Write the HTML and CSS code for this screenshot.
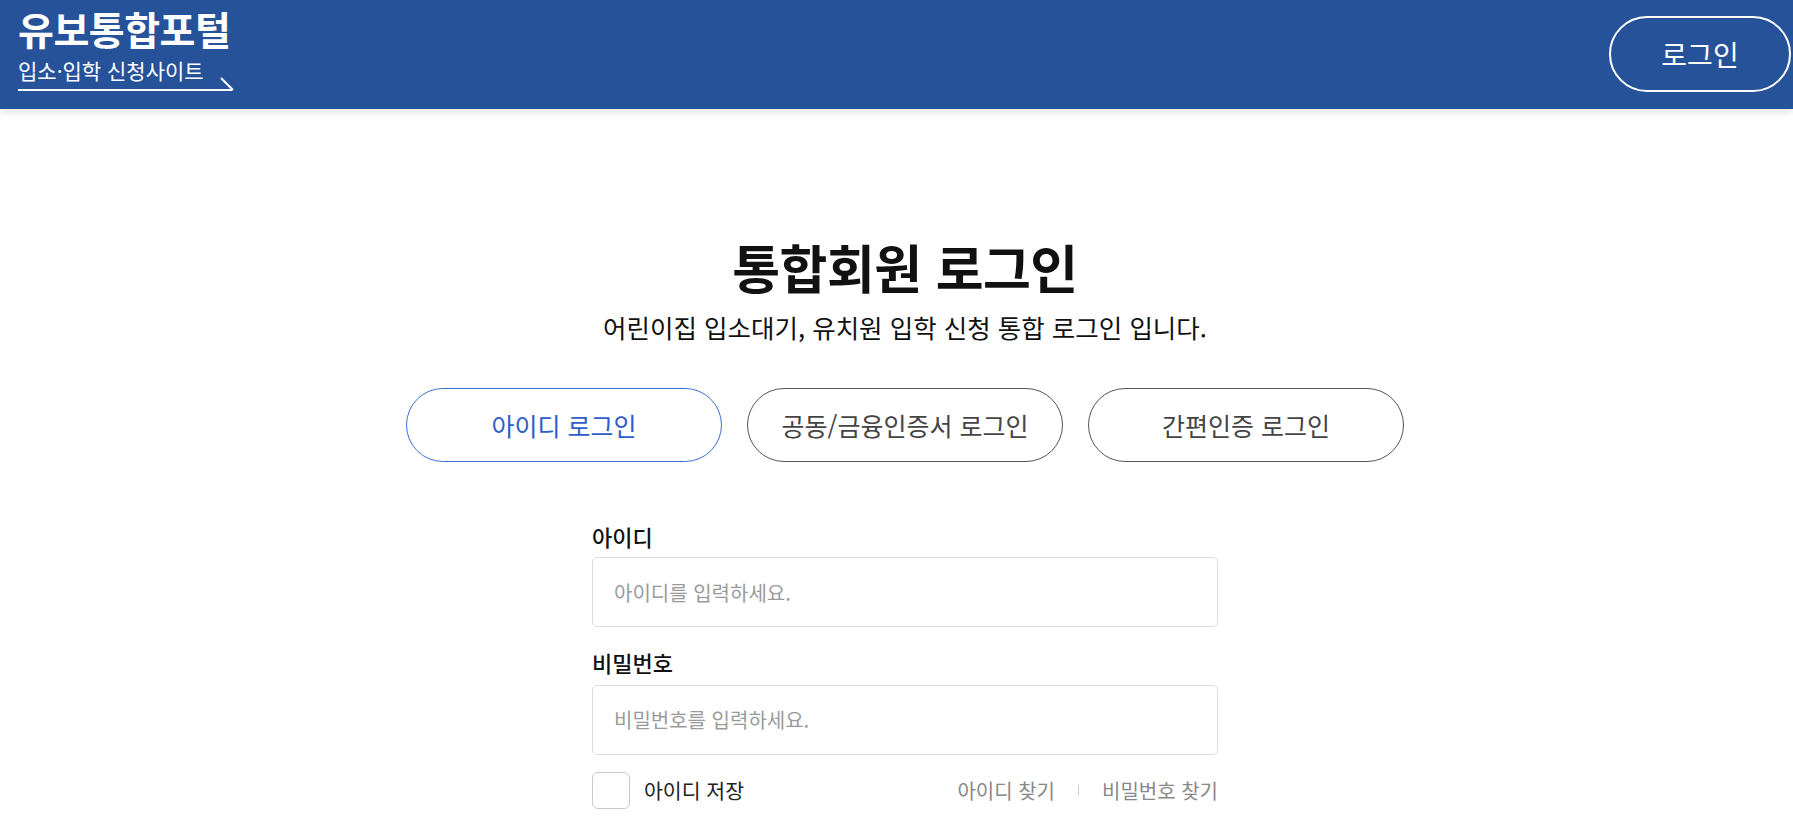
FILE: index.html
```html
<!DOCTYPE html>
<html lang="ko">
<head>
<meta charset="utf-8">
<title>유보통합포털</title>
<link rel="stylesheet" href="styles.css">
</head>
<body>
<header class="top">
  <div class="brand">
    <div class="brand-title">유보통합포털</div>
    <div class="brand-sub">입소·입학 신청사이트</div>
  </div>
  <button class="top-login" type="button">로그인</button>
</header>
<main class="main">
  <h1 class="page-title">통합회원 로그인</h1>
  <p class="page-desc">어린이집 입소대기, 유치원 입학 신청 통합 로그인 입니다.</p>
  <div class="tabs">
    <button class="tab tab-active" type="button">아이디 로그인</button>
    <button class="tab" type="button">공동/금융인증서 로그인</button>
    <button class="tab" type="button">간편인증 로그인</button>
  </div>
  <form class="form">
    <label class="field-label" for="uid">아이디</label>
    <input class="field" id="uid" type="text" placeholder="아이디를 입력하세요.">
    <label class="field-label second" for="upw">비밀번호</label>
    <input class="field second" id="upw" type="password" placeholder="비밀번호를 입력하세요.">
    <div class="options">
      <label class="save">
        <span class="check"></span>
        <span class="save-text">아이디 저장</span>
      </label>
      <div class="finds">
        <a class="find" href="#">아이디 찾기</a>
        <span class="sep"></span>
        <a class="find" href="#">비밀번호 찾기</a>
      </div>
    </div>
  </form>
</main>
</body>
</html>
```
FILE: styles.css
```css
* { box-sizing: border-box; }
html, body { margin: 0; padding: 0; }
body {
  font-family: "Noto Sans CJK KR", "Noto Sans", sans-serif;
  color: #111;
  background: #fff;
  overflow: hidden;
}
.top {
  height: 109px;
  background: #26529a;
  display: flex;
  align-items: center;
  justify-content: space-between;
  padding: 0 2px 0 18px;
  box-shadow: 0 3px 8px rgba(0, 0, 0, 0.12);
  position: relative;
  z-index: 1;
}
.brand { color: #fff; align-self: flex-start; padding-top: 9px; }
.brand-title {
  font-size: 39px;
  font-weight: 700;
  line-height: 1;
  letter-spacing: -0.5px;
}
.brand-sub {
  position: relative;
  margin-top: 12px;
  width: 214px;
  font-size: 21px;
  line-height: 1;
  padding-bottom: 8px;
  border-bottom: 2px solid #fff;
}
.brand-sub::after {
  content: "";
  position: absolute;
  right: -1px;
  bottom: -2px;
  width: 17px;
  height: 2px;
  background: #fff;
  transform-origin: right center;
  transform: rotate(45deg);
}
.top-login {
  width: 182px;
  height: 76px;
  border: 2px solid #fff;
  border-radius: 38px;
  background: transparent;
  color: #fff;
  font-family: inherit;
  font-size: 28px;
  line-height: 1;
  padding: 0;
  margin-top: -1px;
}
.main {
  display: flex;
  flex-direction: column;
  align-items: center;
  padding: 127px 0 0 17px;
}
.page-title {
  margin: 0;
  font-size: 52px;
  font-weight: 700;
  line-height: 1.2;
  letter-spacing: -0.5px;
}
.page-desc {
  margin: 14px 0 0;
  font-size: 25.5px;
  line-height: 1.2;
  color: #111;
}
.tabs {
  display: flex;
  gap: 25px;
  margin-top: 45px;
}
.tab {
  width: 316px;
  height: 74px;
  border: 1px solid #555;
  border-radius: 37px;
  background: #fff;
  color: #444;
  font-family: inherit;
  font-size: 25px;
  padding: 0;
}
.tab-active {
  border-color: #3f6fd2;
  color: #2e5dc9;
}
.form {
  width: 626px;
  display: flex;
  flex-direction: column;
  margin-top: 61px;
}
.field-label {
  font-size: 22px;
  font-weight: 500;
  line-height: 1.2;
  color: #111;
}
.field-label.second { margin-top: 22px; }
.field {
  margin-top: 8px;
  height: 70px;
  border: 1px solid #dcdcdc;
  border-radius: 5px;
  padding: 0 21px;
  font-family: inherit;
  font-size: 20px;
  color: #222;
  outline: none;
}
.field.second { margin-top: 9px; }
.field::placeholder { color: #9a9a9a; }
.options {
  margin-top: 17px;
  display: flex;
  align-items: center;
  justify-content: space-between;
}
.save { display: flex; align-items: center; gap: 14px; }
.check {
  width: 38px;
  height: 37px;
  border: 1px solid #c8c8c8;
  border-radius: 6px;
  background: #fff;
}
.save-text { font-size: 20.5px; color: #222; }
.finds { display: flex; align-items: center; gap: 23px; }
.find { font-size: 20px; color: #888; text-decoration: none; }
.sep { width: 1px; height: 10px; background: #ccc; }
```
